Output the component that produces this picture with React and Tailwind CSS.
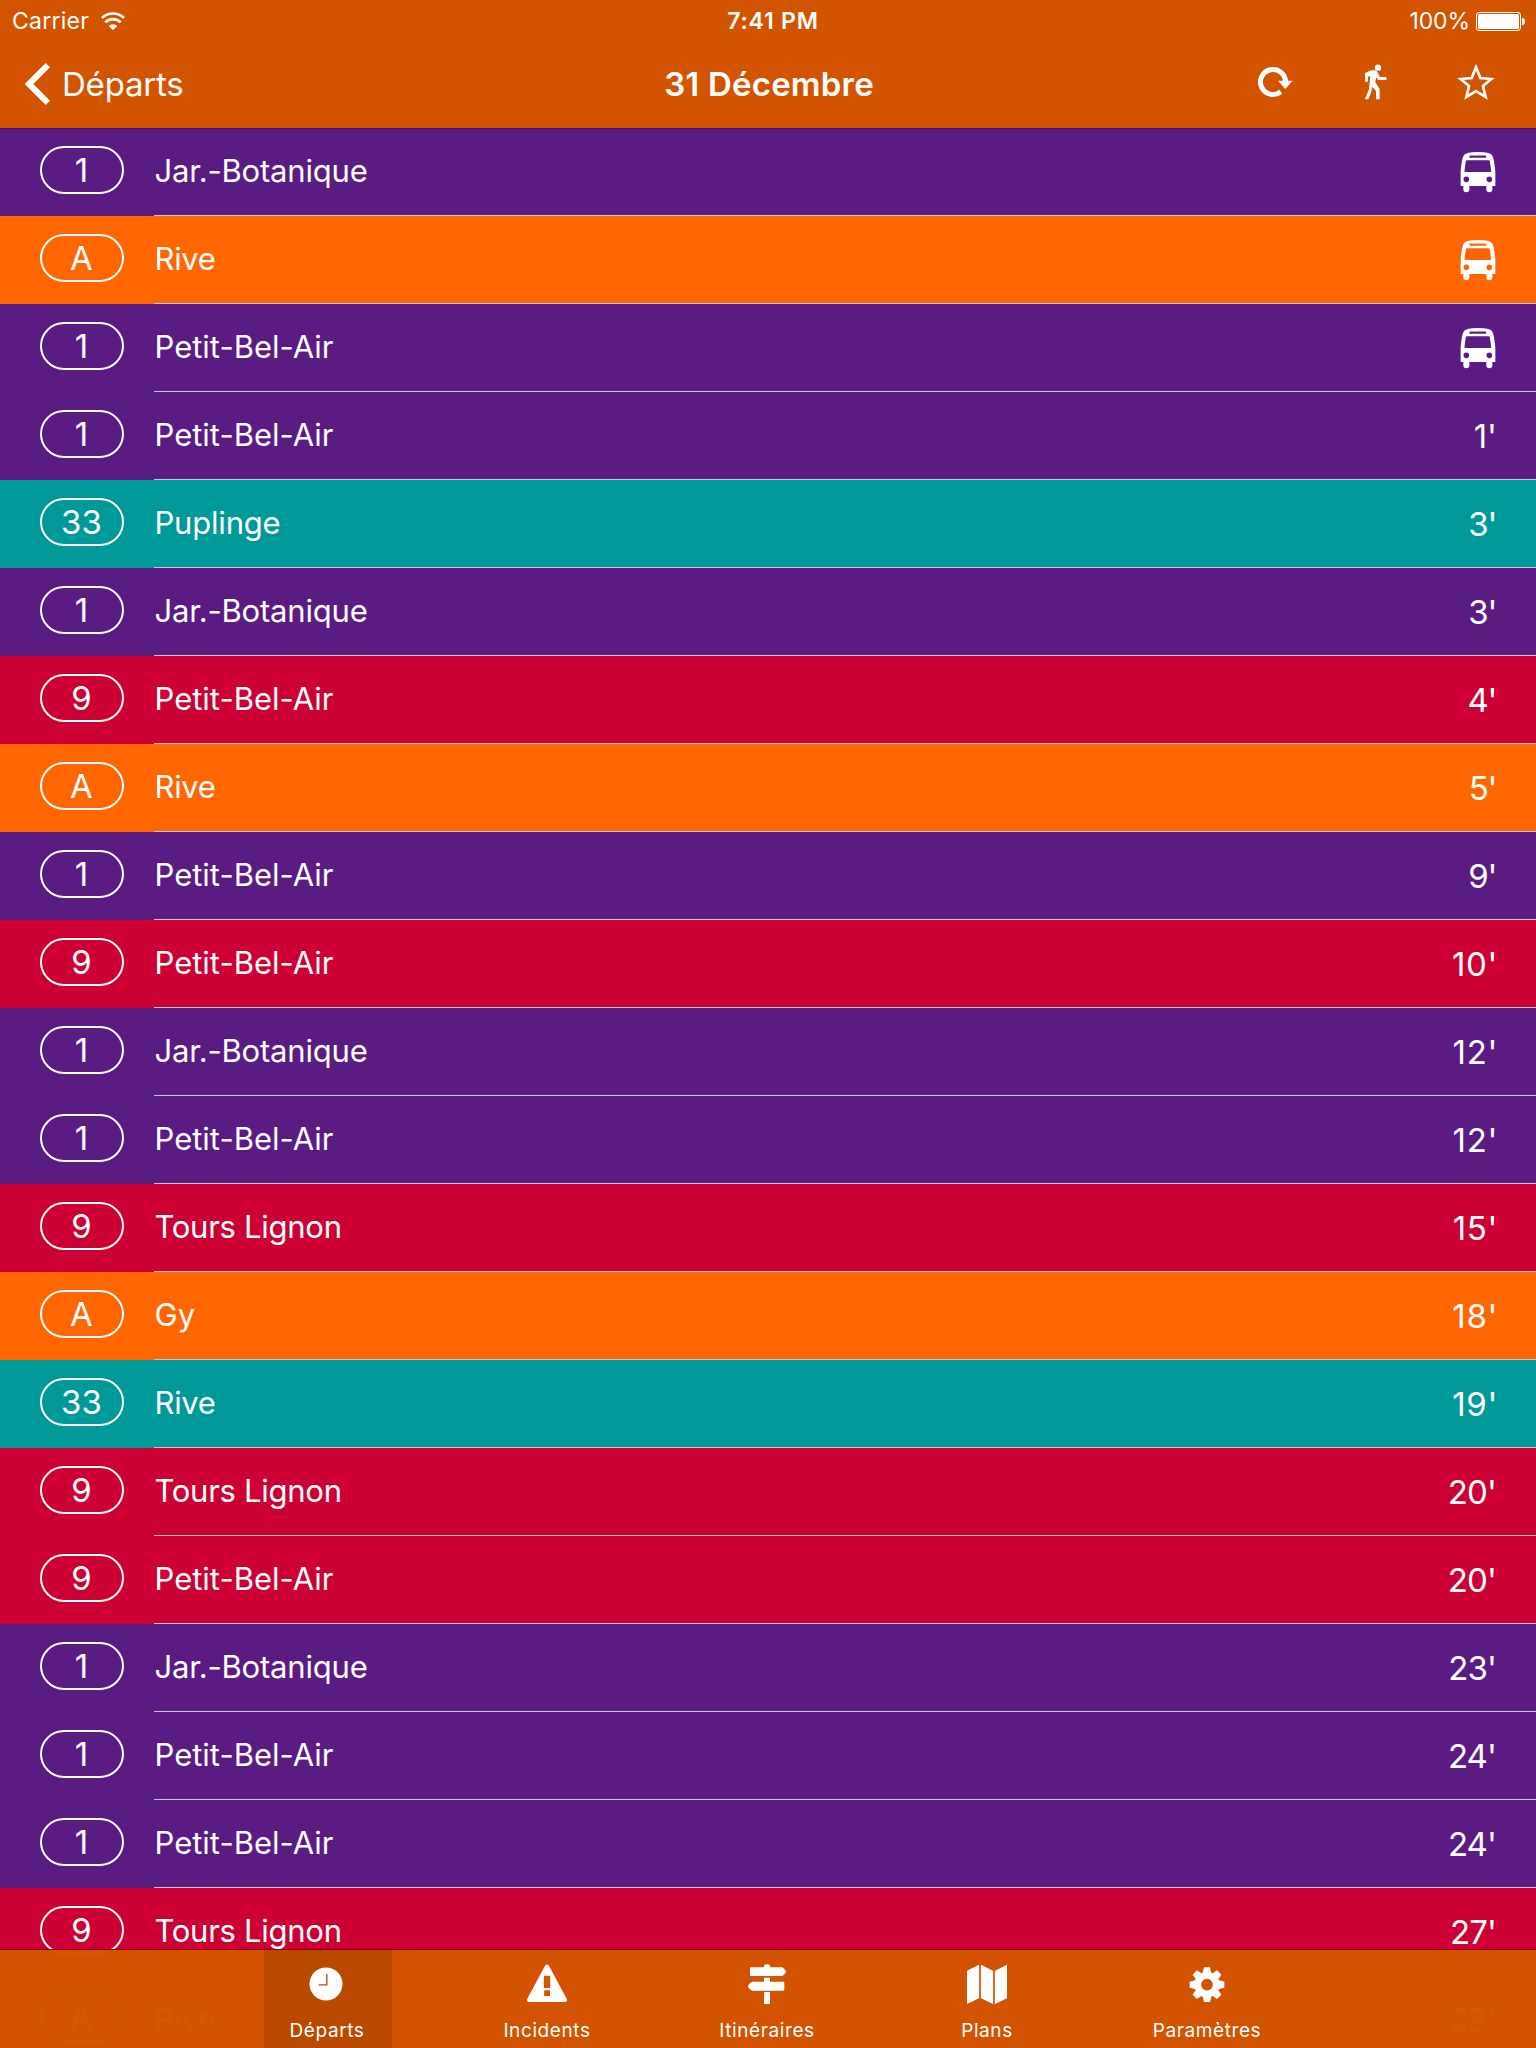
import React from "react";

const PURPLE = "bg-[#5a1c82]";
const ORANGE = "bg-[#ff6600]";
const TEAL = "bg-[#009999]";
const RED = "bg-[#cc0033]";

const departures = [
  ["1", "Jar.-Botanique", null, PURPLE],
  ["A", "Rive", null, ORANGE],
  ["1", "Petit-Bel-Air", null, PURPLE],
  ["1", "Petit-Bel-Air", "1'", PURPLE],
  ["33", "Puplinge", "3'", TEAL],
  ["1", "Jar.-Botanique", "3'", PURPLE],
  ["9", "Petit-Bel-Air", "4'", RED],
  ["A", "Rive", "5'", ORANGE],
  ["1", "Petit-Bel-Air", "9'", PURPLE],
  ["9", "Petit-Bel-Air", "10'", RED],
  ["1", "Jar.-Botanique", "12'", PURPLE],
  ["1", "Petit-Bel-Air", "12'", PURPLE],
  ["9", "Tours Lignon", "15'", RED],
  ["A", "Gy", "18'", ORANGE],
  ["33", "Rive", "19'", TEAL],
  ["9", "Tours Lignon", "20'", RED],
  ["9", "Petit-Bel-Air", "20'", RED],
  ["1", "Jar.-Botanique", "23'", PURPLE],
  ["1", "Petit-Bel-Air", "24'", PURPLE],
  ["1", "Petit-Bel-Air", "24'", PURPLE],
  ["9", "Tours Lignon", "27'", RED],
  ["A", "Rive", "28'", ORANGE],
];

const nameTracking = {
  "Jar.-Botanique": "tracking-[-0.2px]",
  "Petit-Bel-Air": "tracking-[0px]",
  "Tours Lignon": "tracking-[-0.28px]",
  Puplinge: "tracking-[-0.2px]",
  Rive: "tracking-[-0.3px]",
};

function timeSpacing(time) {
  if (time === "1'") return "-mr-px";
  if (time.startsWith("1")) return "-mr-[2px] tracking-[0.65px]";
  return time.length === 2 ? "tracking-[-1.3px]" : "tracking-[-0.9px]";
}

function WifiIcon() {
  return (
    <svg className="ml-[12px] h-[18px] w-[24px]" viewBox="0 0 72 54" fill="none" stroke="white" strokeWidth="8">
      <path d="M3 18 A47 47 0 0 1 69 18" />
      <path d="M13 31 A32 32 0 0 1 59 31" />
      <path d="M36 54 L23 42 A18 18 0 0 1 49 42 Z" fill="white" stroke="none" />
    </svg>
  );
}

function BatteryIcon() {
  return (
    <svg className="h-[19px] w-[49px]" viewBox="0 0 49 19">
      <rect x="0.5" y="0.5" width="44" height="18" rx="2.5" fill="none" stroke="white" />
      <rect x="2" y="2" width="41" height="15" rx="1.5" fill="white" />
      <path d="M46 6 H47 Q49 6.5 49 9.5 Q49 12.500 47 13 H46 Z" fill="white" />
    </svg>
  );
}

function RefreshIcon() {
  return (
    <svg className="h-[36px] w-[36px]" viewBox="1257 64 36 36">
      <path d="M1285.500 82 A12.500 12.500 0 1 0 1280.800 91.700" fill="none" stroke="white" strokeWidth="5" />
      <path d="M1278 80.700 H1292.700 L1285.300 89 Z" fill="white" />
    </svg>
  );
}

function WalkIcon() {
  return (
    <svg className="h-[36px] w-[22px]" viewBox="447 192 66 108" fill="white">
      <circle cx="486" cy="203" r="9.500" />
      <path d="M447 219 L466 211 L478 211 L484 216 L492 231 L511 231 V240 H487 L481 232 L478 247 L491 267 V298 H480 V273 L469 260 L466 275 L457 298 H447 L459 267 L463 228 L456 230 V245 H447 Z" />
    </svg>
  );
}

function StarIcon() {
  return (
    <svg className="h-[36px] w-[38px]" viewBox="722 190 114 108" fill="none" stroke="white" strokeWidth="8">
      <path d="M779 200 L792 232 L825 235 L800 256 L808 289 L779 271.500 L750 289 L758 256 L733 235 L766 232 Z" />
    </svg>
  );
}

function BusIcon() {
  return (
    <svg className="h-[42px] w-[36px]" viewBox="733 452 108 126" fill="white">
      <path
        fillRule="evenodd"
        d="M735 557 V515 C737 490 740 472 745 464 Q752 455 787 455 Q822 455 829 464 C834 472 837 490 839 515 V557 Z M765 465.500 Q761 465.500 761 469 Q761 472.500 765 472.500 H808 Q812 472.500 812 469 Q812 465.500 808 465.500 Z M754 480 Q751 480 750.500 483 L746.500 511 Q746 515 750 515 H823 Q827 515 826.500 511 L822.500 483 Q822 480 819 480 Z M760.500 537 A8.500 8.500 0 1 0 743.500 537 A8.500 8.500 0 1 0 760.500 537 Z M829.500 537 A8.500 8.500 0 1 0 812.500 537 A8.500 8.500 0 1 0 829.500 537 Z"
      />
      <path d="M743 556 H761 V567 Q761 576 752 576 Q743 576 743 567 Z M812 556 H830 V567 Q830 576 821 576 Q812 576 812 567 Z" />
    </svg>
  );
}

function ClockIcon() {
  return (
    <svg className="-ml-[2px] h-[42px] w-[42px]" viewBox="0 0 126 126">
      <circle cx="63" cy="63" r="49.500" fill="white" />
      <path d="M65.500 33 V65.500 H41" fill="none" stroke="#ba4a00" strokeWidth="4" />
    </svg>
  );
}

function AlertIcon() {
  return (
    <svg className="h-[42px] w-[42px]" viewBox="198 99 126 126">
      <path
        fillRule="evenodd"
        fill="white"
        d="M255 107 Q261 100 267 107 L320 206 Q323 215 315 216 H207 Q199 215 202 206 Z M251.500 137 V174 H270.500 V137 Z M252.500 181 V198 H270 V181 Z"
      />
    </svg>
  );
}

function SignsIcon() {
  return (
    <svg className="h-[42px] w-[42px]" viewBox="858 99 126 126" fill="white">
      <path d="M912 112 V107 Q913 103 921 103 Q929 103 930 107 V112 H967 L974 118 Q981 125 974 132 L967 138 H873 Q870 138 870 135 V115 Q870 112 873 112 Z" />
      <path d="M912 143 H930 V155 H969 Q973 155 973 159 V178 Q973 182 969 182 H876 L868 176 Q860 168.500 868 161 L876 155 H912 Z" />
      <path d="M912 186 H930 V222 H912 Z" />
    </svg>
  );
}

function MapIcon() {
  return (
    <svg className="h-[42px] w-[42px]" viewBox="198 99 126 126" fill="white">
      <path d="M201 122 L237 104 V205 L201 222 Z M243 104 L279 122 V222 L243 205 Z M285 122 L321 104 V205 L285 222 Z" />
      <path d="M239.300 104 H240.700 V205 H239.300 Z M281.300 122 H282.700 V222 H281.300 Z" opacity="0.6" />
    </svg>
  );
}

function GearIcon() {
  return (
    <svg className="h-[42px] w-[42px]" viewBox="-63 -65 126 126" fill="white">
      <path
        fillRule="evenodd"
        d="M-9 -52 H9 L13 -36 L17 -34 L30 -43 L43 -30 L34 -17 L36 -13 L52 -9 V9 L36 13 L34 17 L43 30 L30 43 L17 34 L13 36 L9 52 H-9 L-13 36 L-17 34 L-30 43 L-43 30 L-34 17 L-36 13 L-52 9 V-9 L-36 -13 L-34 -17 L-43 -30 L-30 -43 L-17 -34 L-13 -36 Z M17.500 0 A17.500 17.500 0 1 0 -17.500 0 A17.500 17.500 0 1 0 17.500 0 Z"
      />
    </svg>
  );
}

function StatusBar() {
  return (
    <div className="grid h-[40px] grid-cols-3 items-center pt-[1px] pr-[11px] pl-[12px] text-[23px] leading-[40px]">
      <div className="flex items-center">
        <span className="tracking-[0.25px]">Carrier</span>
        <WifiIcon />
      </div>
      <div className="pl-[9px] text-center font-semibold tracking-[0.8px]">7:41 PM</div>
      <div className="flex items-center justify-end gap-[6px]">
        <span className="tracking-[-0.1px]">100%</span>
        <BatteryIcon />
      </div>
    </div>
  );
}

function NavBar() {
  return (
    <div className="grid h-[88px] grid-cols-3 items-center text-[33px] leading-[88px]">
      <div className="flex items-center pl-[24px]">
        <svg className="h-[42px] w-[27px]" viewBox="24 63 27 42" fill="white">
          <path d="M45.700 63 L50 67.300 L33.300 84 L50 100.700 L45.700 105 L24.700 84 Z" />
        </svg>
        <span className="ml-[11px] tracking-[-0.2px]">Départs</span>
      </div>
      <h1 className="pl-[2px] text-center font-semibold tracking-[0.2px]">31 Décembre</h1>
      <div className="flex items-center justify-end pr-[41px] pb-[4px]">
        <RefreshIcon />
        <div className="ml-[72px]"><WalkIcon /></div>
        <div className="ml-[70px]"><StarIcon /></div>
      </div>
    </div>
  );
}

function Row({ line, name, time, color }) {
  return (
    <li className={"flex h-[88px] pl-[40px] " + color}>
      <div className="mt-[18px] h-[48px] w-[84px] shrink-0 rounded-full border-2 border-white pr-px text-center text-[33px] leading-[44px]">
        {line}
      </div>
      <div className="ml-[30px] flex grow justify-between border-b border-[#c8c7cc] pr-[40px]">
        <span className={"pl-[0.5px] text-[31px] leading-[86px] " + (nameTracking[name] || "")}>{name}</span>
        {time ? (
          <span className={"text-[33px] leading-[88px] " + timeSpacing(time)}>{time}</span>
        ) : (
          <span className="mt-[23px]"><BusIcon /></span>
        )}
      </div>
    </li>
  );
}

function Tab({ icon, label, active }) {
  return (
    <div className={"flex w-[128px] flex-col items-center pt-[13px] pr-[2px] " + (active ? "bg-[#ba4a00]" : "")}>
      {icon}
      <span className="mt-[13px] whitespace-nowrap text-[19px] leading-[26px] tracking-[0.6px]">{label}</span>
    </div>
  );
}

export default function App() {
  return (
    <div className="relative h-[2048px] w-[1536px] overflow-hidden bg-[#5a1c82] font-['Inter',sans-serif] text-white">
      <header className="relative h-[128px] bg-[#d35400] shadow-[0_1px_0_#43135f]">
        <StatusBar />
        <NavBar />
      </header>
      <ul>
        {departures.map(([line, name, time, color], i) => (
          <Row key={i} line={line} name={name} time={time} color={color} />
        ))}
      </ul>
      <nav className="absolute inset-x-0 bottom-0 flex h-[99px] justify-center gap-[92px] border-t border-[#8f0024] bg-[#d25400]/98">
        <Tab icon={<ClockIcon />} label="Départs" active />
        <Tab icon={<AlertIcon />} label="Incidents" />
        <Tab icon={<SignsIcon />} label="Itinéraires" />
        <Tab icon={<MapIcon />} label="Plans" />
        <Tab icon={<GearIcon />} label="Paramètres" />
      </nav>
    </div>
  );
}
